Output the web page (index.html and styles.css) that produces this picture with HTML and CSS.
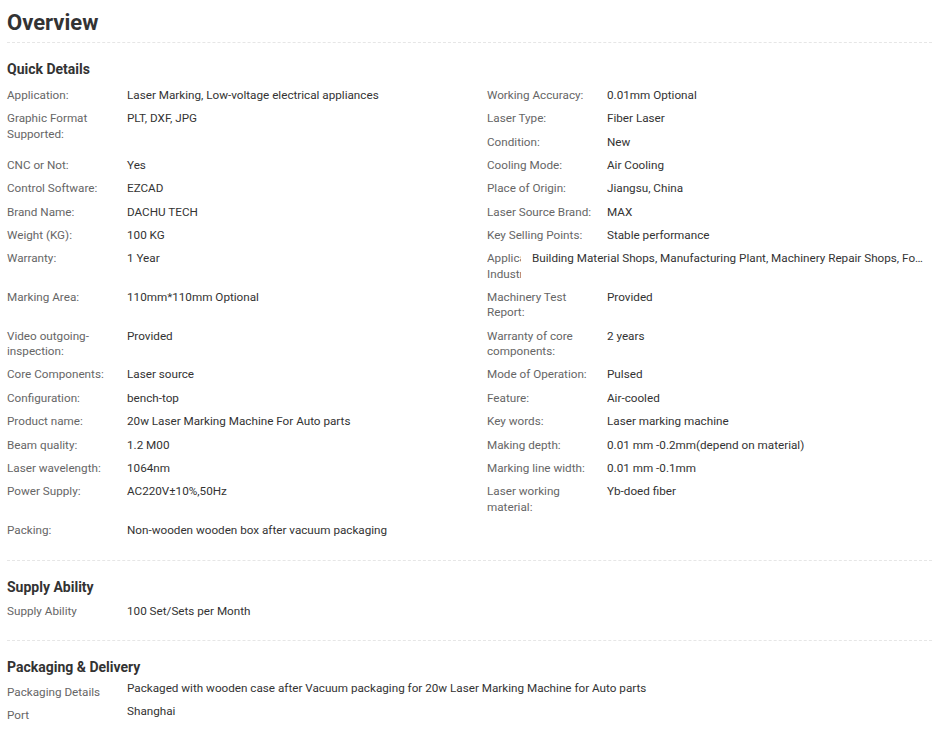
FILE: index.html
```html
<!DOCTYPE html>
<html lang="en">
<head>
    <meta charset="UTF-8">
    <meta name="viewport" content="width=device-width, initial-scale=1.0">
    <title>Overview</title>
    <link rel="stylesheet" href="styles.css">
</head>
<body>
    <div class="overview">
        <h1 class="title">Overview</h1>

        <div class="section details">
            <h3>Quick Details</h3>
            <div class="attrs">
                <div class="attr"><span class="name">Application:</span><span class="value">Laser Marking, Low-voltage electrical appliances</span></div>
                <div class="attr"><span class="name">Working Accuracy:</span><span class="value">0.01mm Optional</span></div>
                <div class="attr"><span class="name">Graphic Format Supported:</span><span class="value">PLT, DXF, JPG</span></div>
                <div class="attr"><span class="name">Laser Type:</span><span class="value">Fiber Laser</span></div>
                <div class="attr"><span class="name">Condition:</span><span class="value">New</span></div>
                <div class="attr"><span class="name">CNC or Not:</span><span class="value">Yes</span></div>
                <div class="attr"><span class="name">Cooling Mode:</span><span class="value">Air Cooling</span></div>
                <div class="attr"><span class="name">Control Software:</span><span class="value">EZCAD</span></div>
                <div class="attr"><span class="name">Place of Origin:</span><span class="value">Jiangsu, China</span></div>
                <div class="attr"><span class="name">Brand Name:</span><span class="value">DACHU TECH</span></div>
                <div class="attr"><span class="name">Laser Source Brand:</span><span class="value">MAX</span></div>
                <div class="attr"><span class="name">Weight (KG):</span><span class="value">100 KG</span></div>
                <div class="attr"><span class="name">Key Selling Points:</span><span class="value">Stable performance</span></div>
                <div class="attr"><span class="name">Warranty:</span><span class="value">1 Year</span></div>
                <div class="attr clip"><span class="name">Applicable Industries:</span><span class="value">Building Material Shops, Manufacturing Plant, Machinery Repair Shops, Food &amp; Beverage Factory, Farms, Restaurant, Home Use, Retail, Food Shop, Printing Shops, Construction works , Energy &amp; Mining, Food &amp; Beverage Shops, Advertising Company</span></div>
                <div class="attr"><span class="name">Marking Area:</span><span class="value">110mm*110mm Optional</span></div>
                <div class="attr"><span class="name">Machinery Test Report:</span><span class="value">Provided</span></div>
                <div class="attr"><span class="name">Video outgoing-inspection:</span><span class="value">Provided</span></div>
                <div class="attr"><span class="name">Warranty of core components:</span><span class="value">2 years</span></div>
                <div class="attr"><span class="name">Core Components:</span><span class="value">Laser source</span></div>
                <div class="attr"><span class="name">Mode of Operation:</span><span class="value">Pulsed</span></div>
                <div class="attr"><span class="name">Configuration:</span><span class="value">bench-top</span></div>
                <div class="attr"><span class="name">Feature:</span><span class="value">Air-cooled</span></div>
                <div class="attr"><span class="name">Product name:</span><span class="value">20w Laser Marking Machine For Auto parts</span></div>
                <div class="attr"><span class="name">Key words:</span><span class="value">Laser marking machine</span></div>
                <div class="attr"><span class="name">Beam quality:</span><span class="value">1.2 M00</span></div>
                <div class="attr"><span class="name">Making depth:</span><span class="value">0.01 mm -0.2mm(depend on material)</span></div>
                <div class="attr"><span class="name">Laser wavelength:</span><span class="value">1064nm</span></div>
                <div class="attr"><span class="name">Marking line width:</span><span class="value">0.01 mm -0.1mm</span></div>
                <div class="attr"><span class="name">Power Supply:</span><span class="value">AC220V±10%,50Hz</span></div>
                <div class="attr"><span class="name">Laser working material:</span><span class="value">Yb-doed fiber</span></div>
                <div class="attr"><span class="name">Packing:</span><span class="value">Non-wooden wooden box after vacuum packaging</span></div>
            </div>
        </div>

        <div class="section supply">
            <h3>Supply Ability</h3>
            <div class="attr"><span class="name">Supply Ability</span><span class="value">100 Set/Sets per Month</span></div>
        </div>

        <div class="section last">
            <h3>Packaging &amp; Delivery</h3>
            <div class="attr delivery"><span class="name">Packaging Details</span><span class="value">Packaged with wooden case after Vacuum packaging for 20w Laser Marking Machine for Auto parts</span></div>
            <div class="attr delivery"><span class="name">Port</span><span class="value">Shanghai</span></div>
        </div>
    </div>
</body>
</html>
```

FILE: styles.css
```css
html, body {
    overflow: hidden;
}

body {
    margin: 0;
    font-family: Roboto, "Liberation Sans", Arial, sans-serif;
    font-size: 11.7px;
    color: #333;
    background: #fff;
}

.overview {
    width: 925px;
    padding: 0 5px 0 7px;
    overflow: hidden;
}

.title {
    margin: 0;
    padding: 8px 0 4px;
    font-size: 22px;
    line-height: 30px;
    font-weight: bold;
    color: #333;
    border-bottom: 1px dashed #e6e6e6;
}

.section {
    padding: 16px 0 16px;
    border-bottom: 1px dashed #e6e6e6;
}

.section.details {
    padding-bottom: 18px;
}

.section.last {
    border-bottom: none;
    padding-bottom: 0;
}

.section h3 {
    margin: 0 0 5px;
    font-size: 14px;
    line-height: 20px;
    font-weight: bold;
    color: #333;
}

.section.supply h3 {
    margin-bottom: 3px;
}

.section.last h3 {
    margin-bottom: 0;
}

.attrs {
    width: 960px;
}

.attrs::after {
    content: "";
    display: block;
    clear: both;
}

.attrs .attr {
    float: left;
    width: 480px;
}

.attr {
    display: flex;
    padding: 4px 0;
    line-height: 15.35px;
}

.attr .name {
    flex: 0 0 110px;
    padding-right: 10px;
    color: #666;
}

.attr .value {
    flex: 1;
    min-width: 0;
    color: #333;
}

.attrs .attr.clip {
    width: 438px;
}

.attr.clip .name {
    flex: 0 0 34px;
    padding-right: 0;
    margin-right: 11px;
    height: 30.7px;
    overflow: hidden;
}

.attr.clip .value {
    white-space: nowrap;
    overflow: hidden;
    text-overflow: ellipsis;
}

.section .attr.delivery {
    padding: 0;
}

.attr.delivery .name {
    padding-top: 8px;
}

.attr.delivery .value {
    padding: 4px 0 4px;
}
```
